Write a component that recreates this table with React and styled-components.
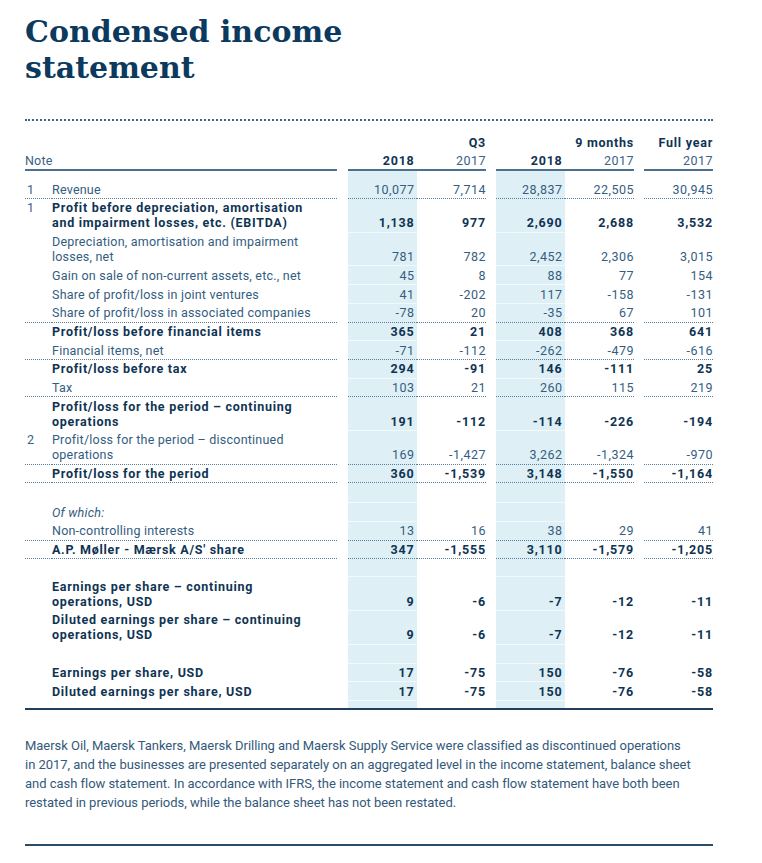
import React from 'react';
import styled, { createGlobalStyle, css } from 'styled-components';

const GlobalStyle = createGlobalStyle`
    body {
        margin: 0;
        background: #fff;
        font-family: Roboto, "Liberation Sans", sans-serif;
    }
`;

const COLS = '27px 285px 11px 69px 69px 10px 69px 69px 10px 69px';
const SHADE = '#dfeff6';
const DOT = '#5b7e9b';
const NAVY = '#0f3453';

const Page = styled.div`
    width: 688px;
    padding: 14px 0 0 25px;
`;

const Title = styled.h1`
    margin: 0;
    font-family: "DejaVu Serif", "Liberation Serif", serif;
    font-weight: bold;
    font-size: 30px;
    line-height: 36px;
    color: #0b3a5e;
`;

const TopRule = styled.div`
    margin-top: 33px;
    border-top: 2px dotted #3f6584;
`;

const Head = styled.div`
    margin-top: 13px;
`;

const Grid = styled.div`
    display: grid;
    grid-template-columns: ${COLS};
    font-size: 12.5px;
    line-height: 15px;
`;

const cellLine = css`
    border-bottom: 1px solid rgba(255, 255, 255, 0.6);
    ${p => p.$line === 'dot' && css`border-bottom: 1px dotted ${DOT};`}
`;

const HeadCell = styled.div`
    padding: 1.4px 0 1.3px;
    text-align: right;
    color: ${p => (p.$bold ? NAVY : '#3a6283')};
    font-weight: ${p => (p.$bold ? 700 : 400)};
    letter-spacing: ${p => (p.$bold ? '0.75px' : '0.5px')};
    padding-right: ${p => (p.$shade ? '2.5px' : '0')};
    ${p => p.$rule && css`border-bottom: 2px solid #4a7191;`}
    ${p => p.$left && css`text-align: left; letter-spacing: 0.2px;`}
`;

const Body = styled.div`
    border-bottom: 2px solid #1f3f5c;
`;

const NoteCell = styled.div`
    padding: 1.4px 0 1.3px 2px;
    color: #3a6283;
    ${cellLine}
`;

const LabelCell = styled.div`
    padding: 1.4px 0 1.3px;
    color: ${p => (p.$bold ? NAVY : '#335d80')};
    font-weight: ${p => (p.$bold ? 700 : 400)};
    font-style: ${p => (p.$italic ? 'italic' : 'normal')};
    letter-spacing: ${p => (p.$bold ? '0.72px' : '0.22px')};
    white-space: nowrap;
    ${cellLine}
`;

const Num = styled.div`
    display: flex;
    align-items: flex-end;
    justify-content: flex-end;
    padding: 1.4px ${p => (p.$shade ? '2.5px' : '0')} 1.3px 0;
    background: ${p => (p.$shade ? SHADE : 'transparent')};
    color: ${p => (p.$bold ? NAVY : '#345e81')};
    font-weight: ${p => (p.$bold ? 700 : 400)};
    letter-spacing: ${p => (p.$bold ? '0.8px' : '0.5px')};
    ${cellLine}
`;

const Gap = styled.div``;

const Spacer = styled.div`
    display: grid;
    grid-template-columns: ${COLS};
    height: ${p => p.$h}px;
`;

const ShadeBox = styled.div`
    background: ${SHADE};
    ${p => p.$line && css`border-bottom: 1px solid rgba(255, 255, 255, 0.6);`}
`;

const Footnote = styled.p`
    margin: 26px 0 0;
    font-size: 13px;
    line-height: 19px;
    color: #34597a;
    letter-spacing: -0.03px;
    white-space: nowrap;
`;

const FootRule = styled.div`
    margin-top: 32px;
    border-top: 2px solid #2b4c69;
`;

const rows = [
    { note: '1', label: ['Revenue'], vals: ['10,077', '7,714', '28,837', '22,505', '30,945'], line: 'dot' },
    { note: '1', label: ['Profit before depreciation, amortisation', 'and impairment losses, etc. (EBITDA)'], bold: true, vals: ['1,138', '977', '2,690', '2,688', '3,532'] },
    { label: ['Depreciation, amortisation and impairment', 'losses, net'], vals: ['781', '782', '2,452', '2,306', '3,015'] },
    { label: ['Gain on sale of non-current assets, etc., net'], vals: ['45', '8', '88', '77', '154'] },
    { label: ['Share of profit/loss in joint ventures'], vals: ['41', '-202', '117', '-158', '-131'] },
    { label: ['Share of profit/loss in associated companies'], vals: ['-78', '20', '-35', '67', '101'], line: 'dot' },
    { label: ['Profit/loss before financial items'], bold: true, vals: ['365', '21', '408', '368', '641'] },
    { label: ['Financial items, net'], vals: ['-71', '-112', '-262', '-479', '-616'], line: 'dot' },
    { label: ['Profit/loss before tax'], bold: true, vals: ['294', '-91', '146', '-111', '25'] },
    { label: ['Tax'], vals: ['103', '21', '260', '115', '219'], line: 'dot' },
    { label: ['Profit/loss for the period – continuing', 'operations'], bold: true, vals: ['191', '-112', '-114', '-226', '-194'] },
    { note: '2', label: ['Profit/loss for the period – discontinued', 'operations'], vals: ['169', '-1,427', '3,262', '-1,324', '-970'], line: 'dot' },
    { label: ['Profit/loss for the period'], bold: true, vals: ['360', '-1,539', '3,148', '-1,550', '-1,164'], line: 'dot' },
    { spacer: 20 },
    { label: ['Of which:'], italic: true, vals: ['', '', '', '', ''] },
    { label: ['Non-controlling interests'], vals: ['13', '16', '38', '29', '41'], line: 'dot' },
    { label: ["A.P. Møller - Mærsk A/S' share"], bold: true, vals: ['347', '-1,555', '3,110', '-1,579', '-1,205'], line: 'dot' },
    { spacer: 18 },
    { label: ['Earnings per share – continuing', 'operations, USD'], bold: true, vals: ['9', '-6', '-7', '-12', '-11'] },
    { label: ['Diluted earnings per share – continuing', 'operations, USD'], bold: true, vals: ['9', '-6', '-7', '-12', '-11'] },
    { spacer: 19 },
    { label: ['Earnings per share, USD'], bold: true, vals: ['17', '-75', '150', '-76', '-58'] },
    { label: ['Diluted earnings per share, USD'], bold: true, vals: ['17', '-75', '150', '-76', '-58'] },
];

const footLines = [
    'Maersk Oil, Maersk Tankers, Maersk Drilling and Maersk Supply Service were classified as discontinued operations',
    'in 2017, and the businesses are presented separately on an aggregated level in the income statement, balance sheet',
    'and cash flow statement. In accordance with IFRS, the income statement and cash flow statement have both been',
    'restated in previous periods, while the balance sheet has not been restated.',
];

function SpacerRow({ h, line }) {
    return (
        <Spacer $h={h}>
            <Gap /><Gap /><Gap />
            <ShadeBox $line={line} /><Gap /><Gap />
            <ShadeBox $line={line} /><Gap /><Gap /><Gap />
        </Spacer>
    );
}

function DataRow({ row }) {
    const { note, label, vals, bold, italic, line } = row;
    const num = (i, shade) => (
        <Num $shade={shade} $bold={bold} $line={line}>{vals[i]}</Num>
    );
    return (
        <Grid>
            <NoteCell $line={line}>{note}</NoteCell>
            <LabelCell $line={line} $bold={bold} $italic={italic}>
                {label.map((l, i) => <div key={i}>{l}</div>)}
            </LabelCell>
            <Gap />
            {num(0, true)}
            {num(1, false)}
            <Gap />
            {num(2, true)}
            {num(3, false)}
            <Gap />
            {num(4, false)}
        </Grid>
    );
}

export default function App() {
    return (
        <Page>
            <GlobalStyle />
            <Title>Condensed income<br />statement</Title>
            <TopRule />

            <Head>
                <Grid>
                    <HeadCell style={{ gridColumn: '4 / 6' }} $bold>Q3</HeadCell>
                    <HeadCell style={{ gridColumn: '7 / 9' }} $bold>9 months</HeadCell>
                    <HeadCell style={{ gridColumn: '10 / 11' }} $bold>Full year</HeadCell>
                </Grid>
                <Grid>
                    <HeadCell style={{ gridColumn: '1 / 3' }} $left $rule>Note</HeadCell>
                    <Gap />
                    <HeadCell $bold $shade $rule>2018</HeadCell>
                    <HeadCell $rule>2017</HeadCell>
                    <Gap />
                    <HeadCell $bold $shade $rule>2018</HeadCell>
                    <HeadCell $rule>2017</HeadCell>
                    <Gap />
                    <HeadCell $rule>2017</HeadCell>
                </Grid>
            </Head>

            <Body>
                <SpacerRow h={9} />
                {rows.map((row, i) =>
                    row.spacer
                        ? <SpacerRow key={i} h={row.spacer} line />
                        : <DataRow key={i} row={row} />
                )}
                <SpacerRow h={7} />
            </Body>

            <Footnote>
                {footLines.map((l, i) => (
                    <React.Fragment key={i}>{l}{i < footLines.length - 1 && <br />}</React.Fragment>
                ))}
            </Footnote>
            <FootRule />
        </Page>
    );
}
